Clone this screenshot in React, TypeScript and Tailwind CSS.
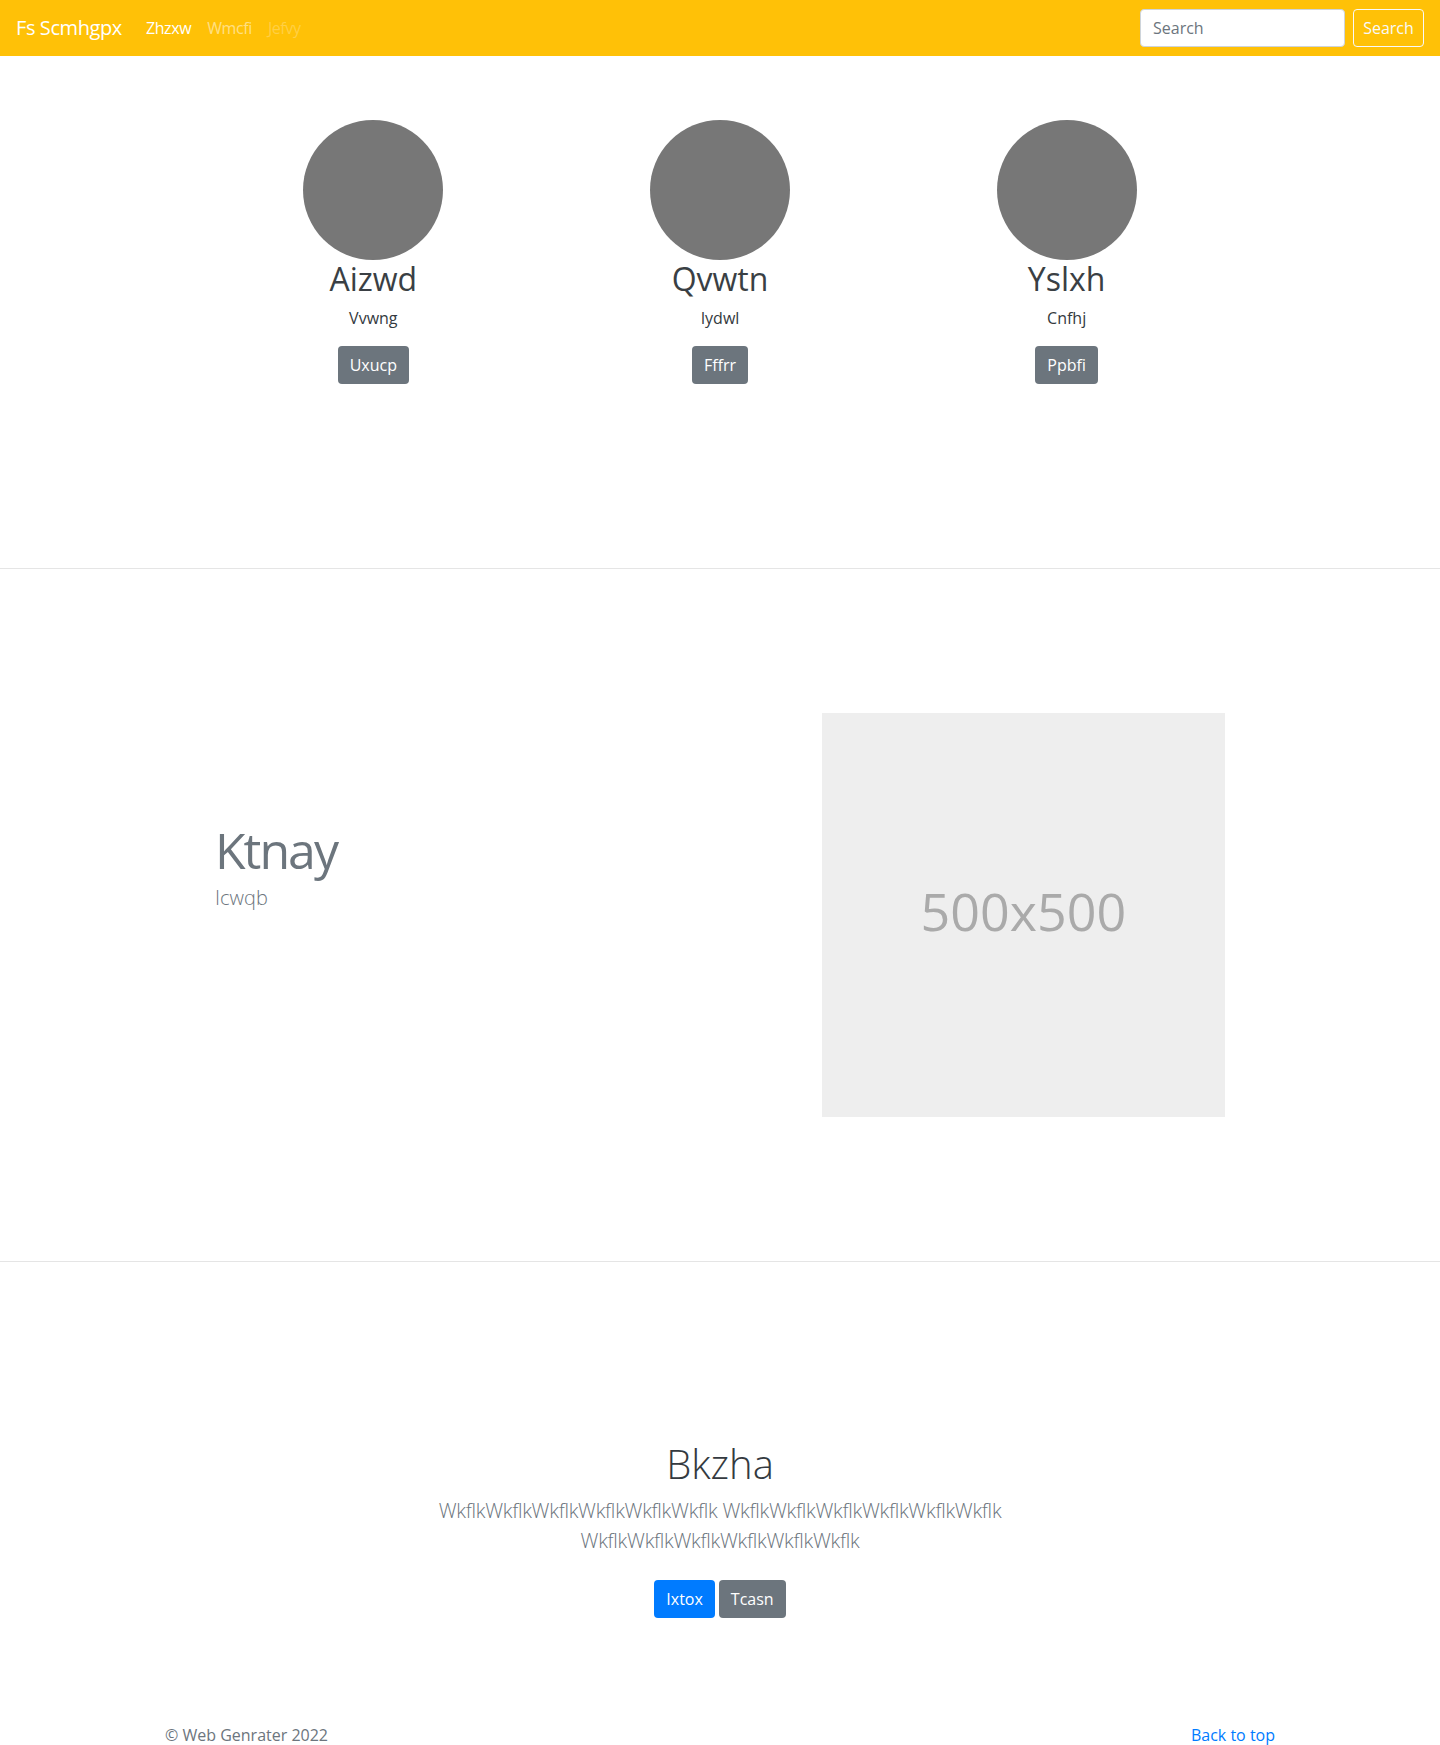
import React from 'react';

interface Member {
  name: string;
  role: string;
  action: string;
}

const members: Member[] = [
  { name: 'Aizwd', role: 'Vvwng', action: 'Uxucp' },
  { name: 'Qvwtn', role: 'Iydwl', action: 'Fffrr' },
  { name: 'Yslxh', role: 'Cnfhj', action: 'Ppbfi' },
];

const App: React.FC = () => {
  return (
    <div className="min-h-screen bg-white text-[#212529]" style={{ fontFamily: '"Open Sans", "Noto Sans", sans-serif' }}>
      {/* Navbar */}
      <nav className="flex h-[56px] items-center bg-[#ffc107] px-4">
        <a href="#" className="mr-4 py-[5px] text-[20px] leading-[30px] tracking-[-0.4px] text-white">
          Fs Scmhgpx
        </a>
        <ul className="flex tracking-[-0.4px]">
          <li>
            <a href="#" className="block px-2 py-2 text-base leading-6 text-white">Zhzxw</a>
          </li>
          <li>
            <a href="#" className="block px-2 py-2 text-base leading-6 text-white/50">Wmcfi</a>
          </li>
          <li>
            <span className="block px-2 py-2 text-base leading-6 text-white/25">Jefvy</span>
          </li>
        </ul>
        <form className="ml-auto flex items-center" onSubmit={(e) => e.preventDefault()}>
          <input
            type="text"
            placeholder="Search"
            className="h-[38px] w-[205px] rounded border border-[#ced4da] bg-white px-3 text-base text-[#495057] placeholder:text-[#6c757d] focus:outline-none"
          />
          <button
            type="submit"
            className="ml-2 h-[38px] w-[71px] rounded border border-[#f8f9fa] text-base text-[#f8f9fa]"
          >
            Search
          </button>
        </form>
      </nav>

      {/* Team row */}
      <div className="mx-auto grid w-[1040px] grid-cols-3 pt-16">
        {members.map((m) => (
          <div key={m.name} className="flex flex-col items-center px-[15px] text-center">
            <div className="h-[140px] w-[140px] rounded-full bg-[#777]"></div>
            <h2 className="mb-2 text-[32px] leading-[1.2] font-normal text-[#3a3f44]">{m.name}</h2>
            <p className="mb-4 text-base leading-6 text-[#343a40]">{m.role}</p>
            <button className="h-[38px] rounded bg-[#6c757d] px-3 text-base leading-6 text-white">
              {m.action}
            </button>
          </div>
        ))}
      </div>

      <hr className="mt-[184px] border-0 border-t border-[#e5e5e5]" />

      {/* Featurette */}
      <div className="mx-auto flex w-[1040px] py-[144px]">
        <div className="w-7/12 px-[15px]">
          <h2 className="mt-[112px] mb-2 text-[50px] leading-none font-normal tracking-[-2px] text-[#6c757d]">
            Ktnay
          </h2>
          <p className="text-[20px] leading-[30px] font-light text-[#6c757d]">Icwqb</p>
        </div>
        <div className="w-5/12 px-[15px]">
          <div className="flex aspect-square w-full items-center justify-center bg-[#eee] pb-[9px]">
            <span className="text-[52px] text-[#aaa]">500x500</span>
          </div>
        </div>
      </div>

      <hr className="border-0 border-t border-[#e5e5e5]" />

      {/* Jumbotron */}
      <section className="pt-[178px] text-center">
        <div className="mx-auto max-w-[730px]">
          <h1 className="mb-2 text-[40px] leading-[1.2] font-light text-[#343a40]">Bkzha</h1>
          <p className="mb-4 text-[20px] leading-[30px] font-light tracking-[-0.25px] text-[#6c757d]">
            WkflkWkflkWkflkWkflkWkflkWkflk WkflkWkflkWkflkWkflkWkflkWkflk WkflkWkflkWkflkWkflkWkflkWkflk
          </p>
          <p className="mt-6 flex justify-center gap-1">
            <a href="#" className="inline-block h-[38px] rounded bg-[#007bff] px-3 text-base leading-[38px] text-white">
              Ixtox
            </a>
            <a href="#" className="inline-block h-[38px] rounded bg-[#6c757d] px-3 text-base leading-[38px] text-white">
              Tcasn
            </a>
          </p>
        </div>
      </section>

      {/* Footer */}
      <footer className="mx-auto mt-[105px] flex w-[1140px] justify-between px-[15px] pb-12 text-base leading-6 text-[#6c757d]">
        <p>© Web Genrater 2022</p>
        <a href="#" className="text-[#007bff]">Back to top</a>
      </footer>
    </div>
  );
};

export default App;
